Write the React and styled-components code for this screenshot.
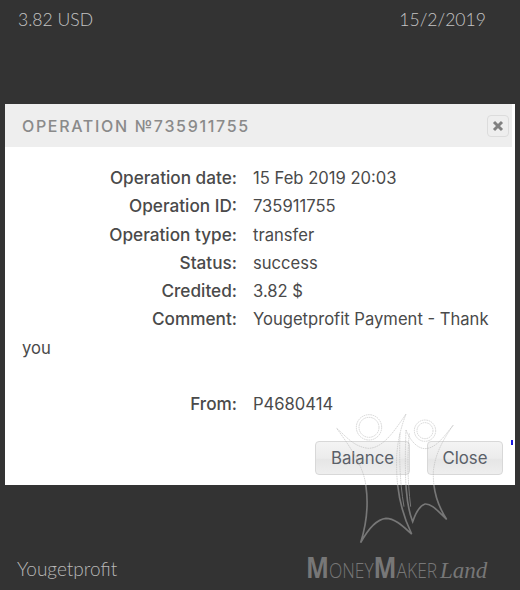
import React from "react";
import styled, { createGlobalStyle } from "styled-components";

const GlobalStyle = createGlobalStyle`
  html, body {
    margin: 0;
    padding: 0;
    background: #333333;
  }
`;

const Page = styled.div`
  position: relative;
  display: flex;
  flex-direction: column;
  width: 520px;
  height: 590px;
  overflow: hidden;
  background: #333333;
  font-family: "Lato", sans-serif;
`;

const TopBar = styled.div`
  display: flex;
  justify-content: space-between;
  height: 104px;
  padding: 8px 34px 0 18px;
  box-sizing: border-box;
  color: #c4c4c4;
  font-size: 17.6px;
  font-weight: 300;
  line-height: 24px;
`;

const Modal = styled.div`
  position: relative;
  width: 510px;
  height: 381px;
  margin-left: 5px;
  background: #ffffff;
`;

const ModalHeader = styled.div`
  display: flex;
  align-items: center;
  justify-content: space-between;
  width: 507px;
  height: 43px;
  padding: 0 3px 0 17px;
  box-sizing: border-box;
  background: #eeeeee;
`;

const ModalTitle = styled.div`
  color: #8a8a8a;
  font-family: "Inter", sans-serif;
  font-size: 16px;
  font-weight: 500;
  letter-spacing: 1.67px;
`;

const CloseIcon = styled.button`
  display: flex;
  align-items: center;
  justify-content: center;
  width: 22px;
  height: 22px;
  padding: 0;
  border: 1px solid #dcdcdc;
  border-radius: 4px;
  background: #eeeeee;
`;

const ModalBody = styled.div`
  padding: 17px 12px 0 17px;
  color: #4a4a4a;
  font-family: "Inter", sans-serif;
  font-size: 16.6px;
  line-height: 28.3px;
`;

const Row = styled.div``;

const Label = styled.span`
  display: inline-block;
  width: 215px;
  margin-right: 16px;
  font-size: 17.2px;
  font-weight: 500;
  text-align: right;
`;

const Value = styled.span`
  font-weight: 400;
`;

const Actions = styled.div`
  display: flex;
  justify-content: flex-end;
  gap: 17px;
  padding: 22px 0 0 0;
`;

const ActionButton = styled.button`
  width: ${(p) => p.$width}px;
  height: 34px;
  padding: 0;
  border: 1px solid #d8d8d8;
  border-radius: 4px;
  background: linear-gradient(#f4f4f4 0%, #ececec 50%, #e6e6e6 55%, #eeeeee 100%);
  color: #5a6068;
  font-family: "Inter", sans-serif;
  font-size: 16.8px;
`;

const BlueTick = styled.span`
  position: absolute;
  left: 506px;
  top: 336px;
  width: 2px;
  height: 5px;
  background: #1818e0;
`;

const Footer = styled.div`
  flex: 1;
  padding: 72px 0 0 17px;
  color: #b8b8b8;
  font-size: 19px;
  font-weight: 300;
  line-height: 24px;
`;

const Watermark = styled.svg`
  position: absolute;
  left: 300px;
  top: 400px;
  width: 220px;
  height: 190px;
  pointer-events: none;
`;

const Logo = styled.div`
  position: absolute;
  left: 306px;
  top: 550px;
  display: flex;
  align-items: baseline;
  color: #777777;
  line-height: 34px;
  white-space: nowrap;
`;

const LogoWord = styled.div`
  width: 134px;
  font-family: "Open Sans", sans-serif;
  font-size: 20px;
  font-weight: 300;
  transform: scaleX(0.87);
  transform-origin: left;
`;

const LogoCap = styled.span`
  font-size: 28px;
  font-weight: 700;
`;

const LogoScript = styled.span`
  font-family: "Liberation Serif", serif;
  font-size: 23px;
  font-style: italic;
`;

const figures =
  "M110 85 C140 110 160 140 205 145 C250 145 285 90 318 42 C300 90 288 140 290 200 C290 260 300 330 335 402 C310 380 285 355 258 355 C225 358 200 395 182 428 C200 370 205 310 198 260 C192 200 150 140 110 85 Z " +
  "M318 90 C330 120 350 145 375 146 C410 145 435 105 460 75 C425 125 405 165 400 215 C398 270 415 320 440 358 C415 335 395 310 375 312 C355 318 345 345 338 365 C320 320 312 250 318 90 Z";

const inner =
  "M300 100 C298 160 298 240 312 320 M328 100 C322 160 322 240 332 320";

function LogoFigures() {
  return (
    <Watermark viewBox="0 0 660 570">
      <defs>
        <clipPath id="onWhite">
          <rect x="0" y="0" width="660" height="255" />
        </clipPath>
        <clipPath id="onDark">
          <rect x="0" y="255" width="660" height="315" />
        </clipPath>
      </defs>
      <g clipPath="url(#onWhite)" fill="none" stroke="#b0b0b0" strokeWidth="1.5" strokeDasharray="5 2">
        <path d={figures} />
        <path d={inner} />
        <circle cx="207" cy="82" r="38" />
        <circle cx="207" cy="82" r="30" />
        <circle cx="375" cy="92" r="32" />
        <circle cx="375" cy="92" r="24" />
      </g>
      <g clipPath="url(#onDark)" fill="none" stroke="#777777" strokeWidth="5">
        <path d={figures} />
        <path d={inner} strokeWidth="3" />
      </g>
    </Watermark>
  );
}

const rows = [
  ["Operation date:", "15 Feb 2019 20:03"],
  ["Operation ID:", "735911755"],
  ["Operation type:", "transfer"],
  ["Status:", "success"],
  ["Credited:", "3.82 $"],
];

export default function App() {
  return (
    <Page>
      <GlobalStyle />
      <TopBar>
        <span>3.82 USD</span>
        <span>15/2/2019</span>
      </TopBar>
      <Modal>
        <ModalHeader>
          <ModalTitle>OPERATION №735911755</ModalTitle>
          <CloseIcon aria-label="Close">
            <svg width="12" height="12" viewBox="0 0 12 12">
              <path d="M2 2 L10 10 M10 2 L2 10" stroke="#808080" strokeWidth="3" />
            </svg>
          </CloseIcon>
        </ModalHeader>
        <ModalBody>
          {rows.map(([label, value]) => (
            <Row key={label}>
              <Label>{label}</Label>
              <Value>{value}</Value>
            </Row>
          ))}
          <Row>
            <Label>Comment:</Label>
            <Value>Yougetprofit Payment - Thank you</Value>
            <br />
            <br />
          </Row>
          <Row>
            <Label>From:</Label>
            <Value>P4680414</Value>
          </Row>
          <Actions>
            <ActionButton $width={95}>Balance</ActionButton>
            <ActionButton $width={76}>Close</ActionButton>
          </Actions>
        </ModalBody>
        <BlueTick />
      </Modal>
      <Footer>Yougetprofit</Footer>
      <LogoFigures />
      <Logo>
        <LogoWord>
          <LogoCap>M</LogoCap>ONEY<LogoCap>M</LogoCap>AKER
        </LogoWord>
        <LogoScript>Land</LogoScript>
      </Logo>
    </Page>
  );
}
